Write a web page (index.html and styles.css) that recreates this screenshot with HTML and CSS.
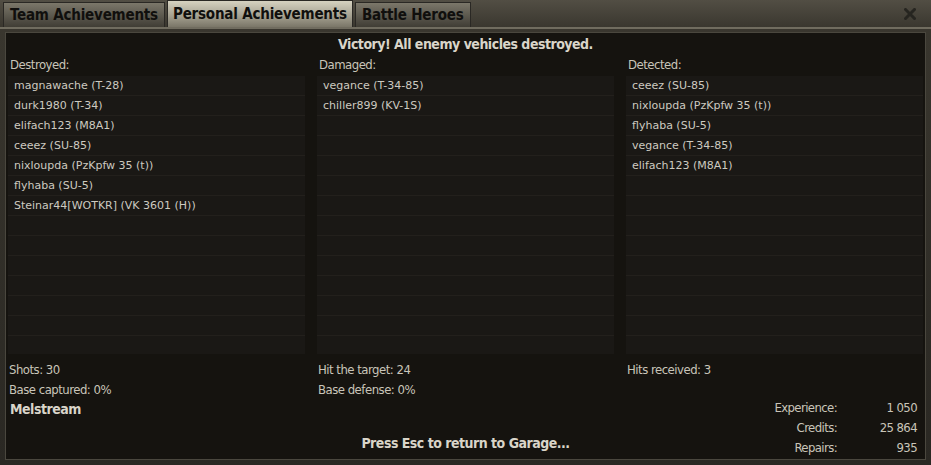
FILE: index.html
```html
<!DOCTYPE html>
<html>
<head>
  <title>Battle Results</title>
  <link rel="stylesheet" href="styles.css">
</head>
<body>
  <div class="window">
    <div class="tabbar">
      <div class="tab">Team Achievements</div>
      <div class="tab active">Personal Achievements</div>
      <div class="tab">Battle Heroes</div>
      <svg class="close" width="12" height="12" viewBox="0 0 12 12">
        <path d="M1.5 1.5 L10.5 10.5 M10.5 1.5 L1.5 10.5" stroke="#262520" stroke-width="3" stroke-linecap="square"/>
      </svg>
    </div>
    <div class="panel">
      <div class="title">Victory! All enemy vehicles destroyed.</div>
      <div class="columns">
        <div class="col">
          <div class="col-head">Destroyed:</div>
          <ul class="list">
            <li>magnawache (T-28)</li>
            <li>durk1980 (T-34)</li>
            <li>elifach123 (M8A1)</li>
            <li>ceeez (SU-85)</li>
            <li>nixloupda (PzKpfw 35 (t))</li>
            <li>flyhaba (SU-5)</li>
            <li>Steinar44[WOTKR] (VK 3601 (H))</li>
            <li></li><li></li><li></li><li></li><li></li><li></li><li></li>
          </ul>
        </div>
        <div class="col">
          <div class="col-head">Damaged:</div>
          <ul class="list">
            <li>vegance (T-34-85)</li>
            <li>chiller899 (KV-1S)</li>
            <li></li><li></li><li></li><li></li><li></li><li></li><li></li>
            <li></li><li></li><li></li><li></li><li></li>
          </ul>
        </div>
        <div class="col">
          <div class="col-head">Detected:</div>
          <ul class="list">
            <li>ceeez (SU-85)</li>
            <li>nixloupda (PzKpfw 35 (t))</li>
            <li>flyhaba (SU-5)</li>
            <li>vegance (T-34-85)</li>
            <li>elifach123 (M8A1)</li>
            <li></li><li></li><li></li><li></li><li></li><li></li><li></li>
            <li></li><li></li>
          </ul>
        </div>
      </div>
      <div class="stats">
        <div class="stat-col">
          <div>Shots: 30</div>
          <div>Base captured: 0%</div>
        </div>
        <div class="stat-col">
          <div>Hit the target: 24</div>
          <div>Base defense: 0%</div>
        </div>
        <div class="stat-col">
          <div>Hits received: 3</div>
        </div>
      </div>
      <div class="footer">
        <div class="player">Melstream</div>
        <div class="esc">Press Esc to return to Garage...</div>
        <div class="rewards">
          <span class="r-label">Experience:</span><span class="r-value">1 050</span>
          <span class="r-label">Credits:</span><span class="r-value">25 864</span>
          <span class="r-label">Repairs:</span><span class="r-value">935</span>
        </div>
      </div>
    </div>
  </div>
</body>
</html>
```
FILE: styles.css
```css
/* battle results window */
body {
  margin: 0;
  background-color: #1b1915;
  font-family: "DejaVu Sans Condensed", "Liberation Sans", sans-serif;
  color: #c9c5b9;
}

.window {
  width: 931px;
  height: 465px;
  display: flex;
  flex-direction: column;
  background: linear-gradient(#3a372f, #2a2823);
}

.tabbar {
  height: 27px;
  display: flex;
  align-items: flex-end;
  gap: 2px;
  padding: 0 3px 0 3px;
  background: linear-gradient(#524e44, #3a372f);
  border-bottom: 2px solid #706c5f;
}

.tab {
  height: 25px;
  padding: 0 6px;
  display: flex;
  align-items: center;
  font-weight: bold;
  font-size: 15px;
  letter-spacing: -0.2px;
  color: #100f0d;
  background: linear-gradient(#7b776a, #403d35);
  border: 1px solid #2a2824;
  border-bottom: none;
  box-sizing: border-box;
}

.tab.active {
  height: 27px;
  padding: 0 5px;
  background: linear-gradient(#d6d2c0, #a29e8e 60%, #7a7668);
}

.close {
  margin-left: auto;
  align-self: center;
  margin-right: 12px;
}

.panel {
  flex: 1;
  margin: 3px 5px 5px 5px;
  border: 1px solid #4a473e;
  background-color: #15130f;
  display: flex;
  flex-direction: column;
  padding: 0 2px;
}

.title {
  height: 22px;
  line-height: 22px;
  text-align: center;
  font-weight: bold;
  font-size: 14px;
  letter-spacing: -0.5px;
  color: #d9d5c9;
}

.columns {
  display: grid;
  grid-template-columns: 1fr 1fr 1fr;
  gap: 12px;
}

.col-head {
  height: 21px;
  line-height: 19px;
  padding-left: 2px;
  font-size: 13px;
  letter-spacing: -0.5px;
}

.list {
  list-style: none;
  margin: 0;
  padding: 0;
  height: 278px;
  overflow: hidden;
  background-color: #181612;
}

.list li {
  height: 20px;
  line-height: 20px;
  box-sizing: border-box;
  border-bottom: 1px solid #23201c;
  padding-left: 6px;
  font-family: "DejaVu Sans", sans-serif;
  font-size: 11px;
  color: #cdcac0;
  background-color: #1a1815;
}

.stats {
  display: grid;
  grid-template-columns: 1fr 1fr 1fr;
  gap: 12px;
  margin-top: 6px;
}

.stat-col div {
  height: 20px;
  line-height: 20px;
  padding-left: 1px;
  font-size: 13px;
  letter-spacing: -0.5px;
}

.footer {
  flex: 1;
  display: grid;
  grid-template-columns: 1fr auto 1fr;
  align-items: start;
}

.player {
  font-weight: bold;
  font-size: 14px;
  letter-spacing: -0.5px;
  color: #d9d5c9;
  padding-left: 2px;
  line-height: 18px;
}

.esc {
  align-self: end;
  margin-bottom: 8px;
  font-weight: bold;
  font-size: 14px;
  letter-spacing: -0.5px;
  color: #d9d5c9;
}

.rewards {
  justify-self: end;
  display: grid;
  grid-template-columns: auto 80px;
  padding-right: 6px;
  margin-top: -2px;
}

.rewards span {
  height: 20px;
  line-height: 20px;
  font-size: 13px;
  letter-spacing: -0.6px;
  text-align: right;
}
```
